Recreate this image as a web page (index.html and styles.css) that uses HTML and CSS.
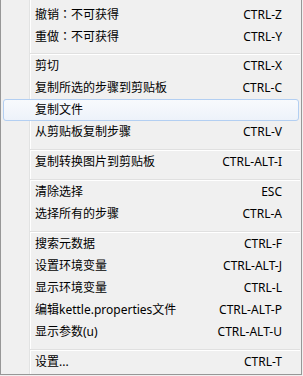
FILE: index.html
```html
<!DOCTYPE html>
<html lang="zh-CN">
<head>
  <meta charset="UTF-8">
  <title>编辑菜单</title>
  <link rel="stylesheet" href="styles.css">
</head>
<body>
  <div class="menu">
    <div class="item"><span class="label">撤销<span class="colon" lang="zh-TW">：</span>不可获得</span><span class="key">CTRL-Z</span></div>
    <div class="item"><span class="label">重做<span class="colon" lang="zh-TW">：</span>不可获得</span><span class="key">CTRL-Y</span></div>
    <div class="sep"></div>
    <div class="item"><span class="label">剪切</span><span class="key">CTRL-X</span></div>
    <div class="item"><span class="label">复制所选的步骤到剪贴板</span><span class="key">CTRL-C</span></div>
    <div class="item active"><span class="label">复制文件</span><span class="key"></span></div>
    <div class="item"><span class="label">从剪贴板复制步骤</span><span class="key">CTRL-V</span></div>
    <div class="sep"></div>
    <div class="item"><span class="label">复制转换图片到剪贴板</span><span class="key">CTRL-ALT-I</span></div>
    <div class="sep"></div>
    <div class="item"><span class="label">清除选择</span><span class="key">ESC</span></div>
    <div class="item"><span class="label">选择所有的步骤</span><span class="key">CTRL-A</span></div>
    <div class="sep"></div>
    <div class="item"><span class="label">搜索元数据</span><span class="key">CTRL-F</span></div>
    <div class="item"><span class="label">设置环境变量</span><span class="key">CTRL-ALT-J</span></div>
    <div class="item"><span class="label">显示环境变量</span><span class="key">CTRL-L</span></div>
    <div class="item"><span class="label">编辑kettle.properties文件</span><span class="key">CTRL-ALT-P</span></div>
    <div class="item"><span class="label">显示参数(u)</span><span class="key">CTRL-ALT-U</span></div>
    <div class="sep"></div>
    <div class="item"><span class="label">设置...</span><span class="key">CTRL-T</span></div>
  </div>
</body>
</html>
```

FILE: styles.css
```css
body {
  margin: 0;
  background-color: #f0f0f0;
  font-family: "Noto Sans", "Noto Sans CJK SC", sans-serif;
  font-size: 12px;
  color: #000;
}
.menu {
  width: 300px;
  padding: 3px 0 1px 0;
  border: 1px solid #979797;
  border-top: none;
  background: linear-gradient(to right, #f0f0f0 28px, #e2e3e3 28px, #e2e3e3 29px, #fff 29px, #fff 30px, #f0f0f0 30px);
}
.item {
  display: grid;
  grid-template-columns: 1fr auto;
  align-items: center;
  height: 20px;
  margin: 0 2px;
  padding: 0 16px 0 31px;
  border: 1px solid transparent;
  border-radius: 3px;
  line-height: 20px;
  white-space: nowrap;
}
.item.active {
  border-color: #b3cff2;
  background: linear-gradient(#f8fafd, #edf2fa);
}
.colon {
  font-family: "Noto Sans CJK TC", sans-serif;
}
.key {
  text-align: right;
}
.sep {
  height: 3px;
  margin: 0 1px 1px 29px;
  padding-top: 3px;
  border-bottom: 1px solid #e0e0e0;
  box-shadow: 0 1px 0 #fff;
}
```
